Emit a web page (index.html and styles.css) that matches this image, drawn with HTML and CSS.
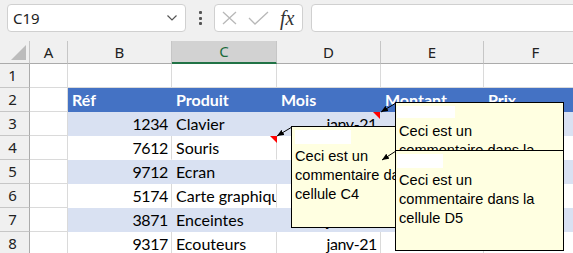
FILE: index.html
```html
<!DOCTYPE html>
<html>
<head>
  <title>Commentaires</title>
  <meta name="viewport" content="width=device-width, initial-scale=1.0" />
  <link rel="stylesheet" href="styles.css">
</head>
<body>
  <div class="bar">
    <div class="namebox">
      <span>C19</span>
      <svg width="10" height="6" viewBox="0 0 10 6"><path d="M0.5 0.5 L5 5 L9.5 0.5" fill="none" stroke="#555" stroke-width="1.2"/></svg>
    </div>
    <div class="grip"><i></i><i></i><i></i></div>
    <div class="fxbox">
      <svg width="15" height="14" viewBox="0 0 15 14"><path d="M1 1 L14 13 M14 1 L1 13" stroke="#b8b8b8" stroke-width="1.3" fill="none"/></svg>
      <svg width="21" height="14" viewBox="0 0 21 14"><path d="M1 7 L7 13 L20 1" stroke="#b8b8b8" stroke-width="1.3" fill="none"/></svg>
      <span class="fx">fx</span>
    </div>
    <div class="formula"></div>
  </div>

  <div class="sheet">
    <div class="corner"><svg width="30" height="23" viewBox="0 0 30 23"><path d="M26 4 L26 19 L11 19 Z" fill="#bcbcbc"/></svg></div>
    <div class="ch">A</div>
    <div class="ch">B</div>
    <div class="ch sel">C</div>
    <div class="ch">D</div>
    <div class="ch">E</div>
    <div class="ch">F</div>

    <div class="rh">1</div>
    <div class="c"></div><div class="c"></div><div class="c"></div><div class="c"></div><div class="c"></div><div class="c"></div>

    <div class="rh">2</div>
    <div class="c"></div>
    <div class="c hd">Réf</div>
    <div class="c hd">Produit</div>
    <div class="c hd">Mois</div>
    <div class="c hd">Montant</div>
    <div class="c hd">Prix</div>

    <div class="rh">3</div>
    <div class="c"></div>
    <div class="c band num">1234</div>
    <div class="c band">Clavier</div>
    <div class="c band num">janv-21</div>
    <div class="c band"></div>
    <div class="c band"></div>

    <div class="rh">4</div>
    <div class="c"></div>
    <div class="c tw num">7612</div>
    <div class="c tw">Souris</div>
    <div class="c tw num">janv-21</div>
    <div class="c tw"></div>
    <div class="c tw"></div>

    <div class="rh">5</div>
    <div class="c"></div>
    <div class="c band num">9712</div>
    <div class="c band">Ecran</div>
    <div class="c band num">janv-21</div>
    <div class="c band"></div>
    <div class="c band"></div>

    <div class="rh">6</div>
    <div class="c"></div>
    <div class="c tw num">5174</div>
    <div class="c tw">Carte graphique</div>
    <div class="c tw num">janv-21</div>
    <div class="c tw"></div>
    <div class="c tw"></div>

    <div class="rh">7</div>
    <div class="c"></div>
    <div class="c band num">3871</div>
    <div class="c band">Enceintes</div>
    <div class="c band num">janv-21</div>
    <div class="c band"></div>
    <div class="c band"></div>

    <div class="rh">8</div>
    <div class="c"></div>
    <div class="c tw num">9317</div>
    <div class="c tw">Ecouteurs</div>
    <div class="c tw num">janv-21</div>
    <div class="c tw"></div>
    <div class="c tw"></div>
  </div>

  <!-- comments, drawn over the grid -->
  <div class="note note-c4">
    <div class="author"></div>
    Ceci est un<br>commentaire dans la<br>cellule C4
  </div>

  <svg class="arrows" width="573" height="253" viewBox="0 0 573 253">
    <defs>
      <marker id="head" markerWidth="7" markerHeight="6" refX="7" refY="3" orient="auto" markerUnits="userSpaceOnUse">
        <path d="M0 0 L7 3 L0 6 Z" fill="#000"/>
      </marker>
    </defs>
    <polygon points="270,136 277,136 277,143" fill="#ff0000"/>
    <polygon points="373,112 380,112 380,119" fill="#ff0000"/>
    <line x1="292" y1="127" x2="277" y2="136" stroke="#000" stroke-width="1" marker-end="url(#head)"/>
    <line x1="396" y1="103" x2="381" y2="112" stroke="#000" stroke-width="1" marker-end="url(#head)"/>
    <line x1="396" y1="151" x2="382" y2="160" stroke="#000" stroke-width="1" marker-end="url(#head)"/>
  </svg>

  <div class="note note-d3">
    <div class="author"></div>
    Ceci est un<br>commentaire dans la<br>cellule D3
  </div>

  <div class="note note-d5">
    <div class="author"></div>
    Ceci est un<br>commentaire dans la<br>cellule D5
  </div>
</body>
</html>
```

FILE: styles.css
```css
* { box-sizing: border-box; }
body { margin: 0; background: #f0f0f0; font-family: "Lato", sans-serif; width: 573px; height: 253px; overflow: hidden; position: relative; }

/* formula bar */
.bar { display: flex; align-items: flex-start; height: 41px; padding: 4px 0 0 7px; }
.namebox { width: 179px; height: 28px; background: #fff; border: 1px solid #d0d0d0; border-radius: 4px; display: flex; align-items: center; justify-content: space-between; padding: 0 8px 0 5px; font: 15px "Noto Sans", sans-serif; color: #222; }
.grip { width: 28px; height: 28px; display: flex; flex-direction: column; align-items: center; justify-content: center; gap: 2.5px; }
.grip i { width: 3px; height: 3px; background: #555; border-radius: 1px; }
.fxbox { width: 89px; height: 28px; background: #fff; border: 1px solid #d0d0d0; border-radius: 4px; display: flex; align-items: center; padding-left: 7px; gap: 11px; }
.fx { font: italic 20px "Liberation Serif", serif; color: #333; line-height: 20px; }
.formula { flex: 1; height: 28px; margin-left: 8px; margin-right: -10px; background: #fff; border: 1px solid #d0d0d0; border-radius: 4px; }

/* grid */
.sheet { display: grid; grid-template-columns: 30px 38px 104px 105px 104px 103px 104px; grid-template-rows: 23px repeat(8, 24px); background: #fff; }
.corner { background: #f0f0f0; border-right: 1px solid #c6c6c6; border-bottom: 1px solid #ababab; }
.corner svg { display: block; }
.ch { background: #f0f0f0; border-right: 1px solid #c6c6c6; border-bottom: 1px solid #ababab; font: 15px/22px "Noto Sans", sans-serif; color: #222; text-align: center; }
.ch.sel { background: #d2d2d2; color: #1a6b3c; border-bottom: 2px solid #217346; line-height: 21px; }
.rh { background: #f0f0f0; border-right: 1px solid #ababab; border-bottom: 1px solid #c6c6c6; font: 15px/23px "Noto Sans", sans-serif; color: #222; text-align: center; padding-right: 4px; }
.c { border-right: 1px solid #dadada; border-bottom: 1px solid #dadada; font-size: 16px; line-height: 24px; color: #000; padding: 0 4px; white-space: nowrap; overflow: hidden; }
.num { text-align: right; padding-right: 3px; letter-spacing: -0.4px; }
.hd { background: #4472c4; border-color: #4472c4; color: #fff; font-weight: bold; padding-left: 4px; }
.band { background: #d9e1f2; border-color: #d9e1f2; }
.tw { border-bottom-color: #fff; }

/* comments */
.arrows { position: absolute; left: 0; top: 0; }
.note { position: absolute; width: 169px; height: 102px; background: #ffffe1; border: 1px solid #000; padding: 3px 3px; font: 14.6px/19px "Liberation Sans", sans-serif; color: #000; overflow: hidden; white-space: nowrap; }
.note .author { background: #fff; height: 14px; margin-bottom: 3px; }
.note-c4 { left: 291px; top: 126px; }
.note-c4 .author { width: 56px; }
.note-d3 { left: 395px; top: 102px; }
.note-d3 .author { width: 58px; height: 12px; margin-left: -2px; margin-bottom: 4px; }
.note-d5 { left: 395px; top: 150px; height: 101px; }
.note-d5 .author { width: 46px; margin-left: -2px; }
```
